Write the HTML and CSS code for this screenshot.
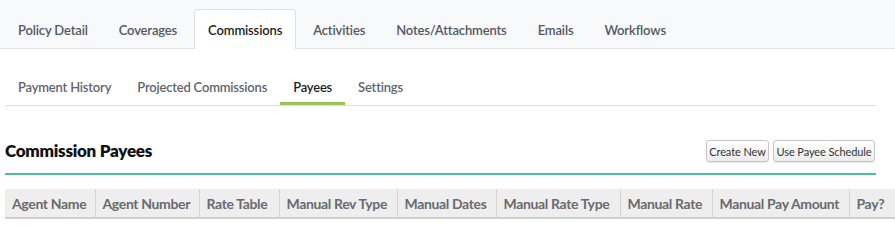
FILE: index.html
```html
<!DOCTYPE html>
<html>
<head>
<meta charset="utf-8">
<link rel="stylesheet" href="styles.css">
</head>
<body>
<nav class="tabbar">
  <a class="tab">Policy Detail</a>
  <a class="tab">Coverages</a>
  <a class="tab active">Commissions</a>
  <a class="tab">Activities</a>
  <a class="tab">Notes/Attachments</a>
  <a class="tab">Emails</a>
  <a class="tab">Workflows</a>
</nav>
<main class="content">
  <nav class="subtabs">
    <a class="subtab">Payment History</a>
    <a class="subtab">Projected Commissions</a>
    <a class="subtab active">Payees</a>
    <a class="subtab">Settings</a>
  </nav>
  <div class="section-head">
    <h2 class="section-title">Commission Payees</h2>
    <div class="actions">
      <button class="btn btn-create">Create New</button>
      <button class="btn btn-schedule">Use Payee Schedule</button>
    </div>
  </div>
  <table class="grid">
    <thead>
      <tr>
        <th class="c1">Agent Name</th>
        <th class="c2">Agent Number</th>
        <th class="c3">Rate Table</th>
        <th class="c4">Manual Rev Type</th>
        <th class="c5">Manual Dates</th>
        <th class="c6">Manual Rate Type</th>
        <th class="c7">Manual Rate</th>
        <th class="c8">Manual Pay Amount</th>
        <th class="c9">Pay?</th>
      </tr>
    </thead>
  </table>
</main>
</body>
</html>
```

FILE: styles.css
```css
html, body {
  margin: 0;
  padding: 0;
  background: #fff;
  font-family: "Source Sans Pro", Lato, "Liberation Sans", sans-serif;
  overflow: hidden;
}

.tabbar {
  display: flex;
  align-items: flex-end;
  height: 48px;
  padding-left: 4px;
  background: #f8f9fa;
  border-bottom: 1px solid #e3e3e3;
}

.tab {
  display: block;
  box-sizing: border-box;
  height: 40px;
  margin-bottom: -1px;
  margin-right: 3px;
  padding: 10px 13px 0;
  font-size: 13px;
  font-weight: 600;
  line-height: 20px;
  letter-spacing: -0.15px;
  color: #545763;
  border: 1px solid transparent;
  border-bottom: none;
  border-radius: 4px 4px 0 0;
}

.tab.active {
  background: #fff;
  color: #1d1d26;
  border-color: #e0e0e0;
}

.content {
  margin-left: 5px;
  width: 871px;
}

.subtabs {
  display: flex;
  margin-top: 18px;
  border-bottom: 1px solid #dedede;
}

.subtab {
  display: block;
  padding: 10px 13px 5px;
  font-size: 13px;
  font-weight: 600;
  line-height: 20px;
  letter-spacing: -0.2px;
  color: #62646d;
  border-bottom: 3px solid transparent;
}

.subtab.active {
  color: #1d1d26;
  border-bottom-color: #9cc35a;
}

.section-head {
  display: flex;
  align-items: center;
  justify-content: space-between;
  margin-top: 34px;
  padding-bottom: 11px;
  border-bottom: 2px solid #4dbf9e;
}

.section-title {
  margin: 0;
  font-size: 17px;
  font-weight: 800;
  line-height: 22px;
  letter-spacing: -0.25px;
  color: #111;
}

.actions {
  display: flex;
  gap: 4px;
  padding-right: 1px;
}

.btn {
  box-sizing: border-box;
  height: 22px;
  padding: 0;
  font-family: inherit;
  font-size: 11px;
  letter-spacing: -0.1px;
  white-space: nowrap;
  color: #333;
  background: linear-gradient(#ffffff, #ececec);
  border: 1px solid #c6c6c6;
  border-radius: 3px;
  box-shadow: 0 1px 1px rgba(0,0,0,0.08);
}

.btn-create { width: 63px; }
.btn-schedule { width: 102px; }

.grid {
  margin-top: 14px;
  border-collapse: collapse;
  table-layout: fixed;
  width: 890px;
}

.grid th {
  box-sizing: border-box;
  height: 29px;
  padding: 0 4px 0 7px;
  text-align: left;
  white-space: nowrap;
  font-size: 14px;
  font-weight: 700;
  letter-spacing: -0.35px;
  color: #6a6a6f;
  background: #eeeeee;
  border-left: 1px solid #d3d3d3;
  border-bottom: 2px solid #d0d0d0;
}

.grid th:first-child { border-left: none; }

.c1 { width: 90px; }
.c2 { width: 104px; }
.c3 { width: 80px; }
.c4 { width: 118px; }
.c5 { width: 99px; }
.c6 { width: 124px; }
.c7 { width: 92px; }
.c8 { width: 137px; }
.c9 { width: 46px; }
```
